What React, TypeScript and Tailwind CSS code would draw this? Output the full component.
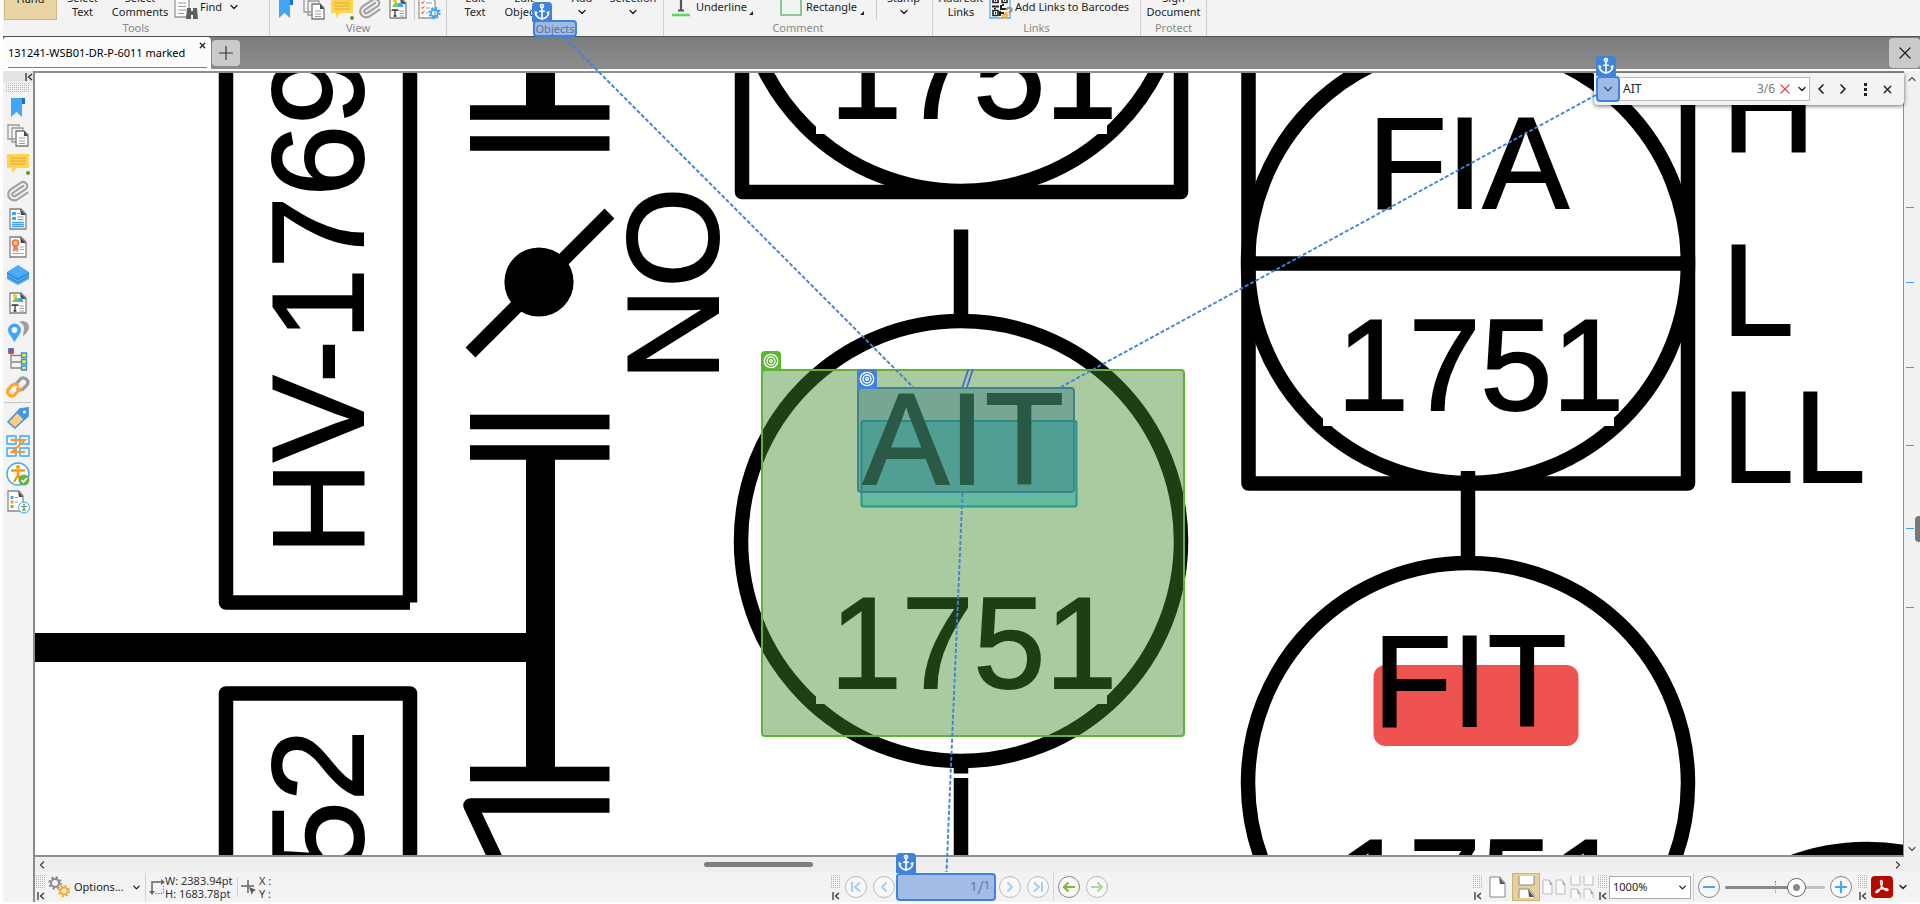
import React from "react";
import { Anchor, ChevronDown, ChevronLeft, ChevronRight, ChevronUp, X, Plus, Minus, Paperclip } from "lucide-react";

type Kids = { children?: React.ReactNode };

const Ico = ({ s = 24, children }: Kids & { s?: number }) => (
  <svg width={s} height={s} viewBox="0 0 24 24" fill="none" aria-hidden="true" className="shrink-0">
    {children}
  </svg>
);

const BookmarkIcon = () => (
  <Ico>
    <path d="M5 3h11v19l-5.500-5L5 22z" fill="#42a5f5" />
    <path d="M16 3h3v6h-3z" fill="#1a73c9" />
  </Ico>
);
const PagesIcon = () => (
  <Ico>
    <path d="M9 16H2V2h11v2M12 19H6V5h11v2" stroke="#999" strokeWidth="1.300" />
    <path d="M10 8h8l4 4v11H10z" fill="#fff" stroke="#777" strokeWidth="1.300" />
    <path d="M18 8l4 5h-4z" fill="#444" />
    <path d="M13 15h6M13 18h6M13 20.500h6" stroke="#999" />
  </Ico>
);
const CommentIcon = () => (
  <Ico>
    <path d="M1 3h22v14H11l-5 5v-5H1z" fill="#ffd54f" />
    <path d="M4 7h16M4 10h16M4 13h16" stroke="#e0a93a" />
    <circle cx="22" cy="22" r="2" fill="#5a9a1e" />
  </Ico>
);
const ClipIcon = () => <Paperclip size={24} color="#a3a3a3" strokeWidth={2.2} className="shrink-0 rotate-12" aria-hidden="true" />;

const Sheet = () => (
  <>
    <path d="M4 2h11l5 5v15H4z" fill="#fff" stroke="#808080" strokeWidth="1.300" />
    <path d="M14 2l6 6h-5z" fill="#444" />
  </>
);
const ListIcon = () => (
  <Ico>
    <Sheet />
    <path d="M6 5h4v3H6zM6 10h4v3H6z" fill="#42a5f5" />
    <path d="M11.500 6.500H14M11.500 10h6M11.500 12.500h6" stroke="#888" />
    <path d="M6 15.500h12M6 17.500h12M6 19.500h12" stroke="#42a5f5" strokeWidth="1.300" />
  </Ico>
);
const CertIcon = () => (
  <Ico>
    <Sheet />
    <path d="M7.500 10l-1 7 3-1.500 3 1.500-1-7z" fill="#f4845f" />
    <circle cx="9.500" cy="8" r="3" fill="#ffcc80" stroke="#f4694a" strokeWidth="1.600" />
    <path d="M14 12h4M14 14.500h4M6 18.500h12" stroke="#aaa" />
  </Ico>
);
const LayersIcon = () => (
  <Ico>
    <path d="M1 9v7l11 6 11-6V9z" fill="#2d8fe0" />
    <path d="M1 12l11 6 11-6M1 15l11 6 11-6" stroke="#7cc1f8" strokeWidth="0.800" />
    <path d="M12 2l11 7-11 6L1 9z" fill="#4dabf5" />
  </Ico>
);
const ImageTextIcon = () => (
  <Ico>
    <Sheet />
    <path d="M6 11l4-6 4 6z" fill="#8bc34a" />
    <circle cx="9" cy="5" r="2" fill="#fbc02d" />
    <path d="M12 7h5v4h-5z" fill="#42a5f5" />
    <path d="M6 14h6M6 15v-1M12 15v-1M9 14v6M7.500 20h3" stroke="#333" strokeWidth="1.300" />
    <path d="M13.500 15h4.500M13.500 17.500h4.500M13.500 20h4.500" stroke="#999" />
  </Ico>
);
const PinsIcon = () => (
  <Ico>
    <path d="M16 2c4 0 7 2.500 7 6 0 4-3 6-6 10 0-4 1-7 1-9 0-3-2-5-5-6z" fill="#9e9e9e" />
    <path fillRule="evenodd" d="M8.500 23C5 17 2 14.500 2 11a6.500 6.500 0 0 1 13 0c0 3.500-3 6-6.500 12zM8.500 8a3 3 0 1 0 0 6 3 3 0 0 0 0-6z" fill="#42a5f5" />
  </Ico>
);
const TreeIcon = () => (
  <Ico>
    <path d="M5 4v17h10M5 8.500h10M5 15h10" stroke="#888" strokeWidth="1.300" />
    <path d="M2.500 1.500h5v5h-5z" fill="#e53935" stroke="#2f8fe0" />
    <path d="M15.500 6h5v4.500h-5zM15.500 12.500h5V17h-5zM15.500 19h5v4h-5z" fill="#ffeb3b" stroke="#2f8fe0" strokeWidth="1.300" />
  </Ico>
);
const LinkIcon = () => (
  <Ico>
    <g strokeWidth="3.200" strokeLinecap="round">
      <path d="M10 9l4-4.500c4-4 10 1 7 5.500l-4 4c-1.500 1.500-4 1-5 0" stroke="#9a9a9a" />
      <path d="M14 14l-5 5.500c-4 4-9.500-1-6.500-5.500l4-4c1.500-1.500 4-1 5 0" stroke="#ffa726" />
    </g>
  </Ico>
);
const TagIcon = () => (
  <Ico>
    <path d="M14 3l8-1v8L9 22l-7-6z" fill="#ffcc80" stroke="#3f98e6" strokeWidth="1.600" />
    <path d="M14 2.500l8.500-1v9L18 14l-7-7z" fill="#3f98e6" />
    <circle cx="18.500" cy="6" r="1.600" fill="#fff" />
  </Ico>
);
const ZIcon = () => (
  <Ico>
    <path d="M1 2h9v8H1zM14 2h9v8h-9zM1 14h9v8H1zM14 14h9v8h-9z" fill="#e8f4fe" stroke="#42a5f5" strokeWidth="1.400" />
    <path d="M5 6h14L6 18h13" stroke="#f59a23" strokeWidth="2" />
  </Ico>
);
const AccessIcon = () => (
  <Ico>
    <circle cx="12" cy="12" r="11" fill="#fff" stroke="#42a5f5" strokeWidth="1.400" />
    <circle cx="12" cy="5" r="2" fill="#ff9800" />
    <path d="M5 8.500h14M12 8v6M12 13l-4 7M12 13l3 6" stroke="#ff9800" strokeWidth="2.400" />
    <circle cx="18" cy="18" r="5.500" fill="#6aaf45" />
    <path d="M15.500 18l2 2 3.500-4" stroke="#fff" strokeWidth="1.600" />
  </Ico>
);
const AccessListIcon = () => (
  <Ico>
    <path d="M2 1h11l4 5v15H2z" fill="#fff" stroke="#888" strokeWidth="1.300" />
    <path d="M12 1l5 6h-4z" fill="#444" />
    <path d="M4.500 6h3v3h-3z" fill="#42a5f5" />
    <path d="M4.500 10.500h3v3h-3z" fill="#ff9800" />
    <path d="M4.500 15h3v3h-3z" fill="#7cb342" />
    <path d="M9 7.500h3M9 12h3" stroke="#999" />
    <circle cx="18" cy="17.500" r="5.500" fill="#fff" stroke="#42a5f5" />
    <circle cx="18" cy="14.500" r="1" fill="#43a047" />
    <path d="M15 16.500h6M18 16v2.500L16.500 21M18 18.500l1.500 2.500" stroke="#43a047" strokeWidth="1.200" />
  </Ico>
);
const Gear = ({ cx, cy, r, color }: { cx: number; cy: number; r: number; color: string }) => (
  <g stroke={color} fill="none">
    <circle cx={cx} cy={cy} r={r - 0.5} strokeWidth="2" />
    <circle cx={cx} cy={cy} r={r + 1.2} strokeWidth="2" strokeDasharray={`${(r + 1.2) * 0.393} ${(r + 1.2) * 0.393}`} />
  </g>
);
const ListGearIcon = () => (
  <Ico>
    <path d="M2 1h12l4 4v17H2z" fill="#fff" stroke="#999" strokeWidth="1.300" />
    <path d="M4.500 6l1 1.500L7.500 5M4.500 11l1 1.500 2-2.500M4.500 16l1 1.500 2-2.500" stroke="#f4694a" strokeWidth="1.200" />
    <path d="M9 7h6M9 12h4M9 17h2" stroke="#999" />
    <Gear cx={17.5} cy={17} r={4} color="#42a5f5" />
  </Ico>
);
const BinocularsIcon = () => (
  <Ico>
    <path d="M1 0h10l4 4v17H1z" fill="#fff" stroke="#999" strokeWidth="1.300" />
    <path d="M4 7h8M4 10.500h8M4 14h8M4 17.500h6" stroke="#999" />
    <path d="M13 12h4v3h2v-3h4l1 11h-5v-4h-2v4h-5z" fill="#5c6166" />
  </Ico>
);
const QrIcon = () => (
  <Ico>
    <path d="M1 0h20v22H1z" fill="#fff" stroke="#7dbdf5" strokeWidth="1.800" />
    <path d="M4 1.500h5v5H4zM13 1.500h5v5h-5zM4 14.500h5v5H4z" stroke="#222" strokeWidth="1.600" />
    <path d="M3 10.500h7M12 9v4h6M11 15v5M14 10v-2M6 12v1.500M6 17h1M6 4h1M15 4h1M12 17h3" stroke="#222" strokeWidth="2" />
    <path d="M17 14l2-2c2-1 5 1 3 3l-2 2" stroke="#999" strokeWidth="2.200" />
    <path d="M18 16l-4 4c-1 2 1 3 3 1l2-3" stroke="#ffa726" strokeWidth="2.200" />
  </Ico>
);

const CollapseIcon = () => (
  <svg width="8" height="8" viewBox="0 0 8 8" fill="none" stroke="#333" strokeWidth="1.300" aria-hidden="true">
    <path d="M1 0v8M7 1L3.500 4 7 7" />
  </svg>
);
const Dots = ({ w, h }: { w: number; h: number }) => (
  <svg width={w} height={h} aria-hidden="true">
    <g stroke="#b4b4b4" strokeDasharray="1 1">
      {Array.from({ length: Math.floor(h / 2) }, (_, i) => (
        <path key={i} d={`M0 ${i * 2 + 0.5}H${w}`} />
      ))}
    </g>
  </svg>
);
const Grip = () => (
  <div className="flex h-7 w-[10px] shrink-0 flex-col items-center justify-between pb-px pt-[2px]">
    <Dots w={10} h={15} />
    <CollapseIcon />
  </div>
);
const Rule = () => <div className="mx-1 h-7 w-px shrink-0 bg-[#d2d2d2]" />;

const AnchorBadge = ({ className }: { className: string }) => (
  <span className={`absolute z-30 flex size-5 items-center justify-center rounded-t bg-[#4083dc] text-white ${className}`}>
    <Anchor size={18} strokeWidth={2.2} />
  </span>
);

const Group = ({ title, className, children }: Kids & { title: React.ReactNode; className: string }) => (
  <section className={`flex h-9 shrink-0 flex-col border-r border-[#cfcfcf] ${className}`}>
    <div className="flex h-5 items-end">{children}</div>
    <div className="h-4 text-center leading-4 text-[#888]">{title}</div>
  </section>
);
const Two = ({ a, b, className }: { a: string; b?: string; className: string }) => (
  <button className={`flex shrink-0 flex-col items-center pb-px leading-[14px] ${className}`}>
    <span>{a}</span>
    {b ? <span>{b}</span> : <ChevronDown size={12} strokeWidth={2.8} className="h-[14px]" />}
  </button>
);
const IconButton = ({ label, className, children }: Kids & { label: string; className: string }) => (
  <button aria-label={label} className={`flex shrink-0 items-center justify-center ${className}`}>
    {children}
  </button>
);

const Ribbon = () => (
  <header className="flex h-[37px] shrink-0 border-b border-[#555] bg-[#f3f3f3]">
    <Group title="Tools" className="w-[267px]">
      <button className="ml-px flex h-10 w-[53px] shrink-0 items-end justify-center border border-[#cdb87f] bg-[#e8d5a3] pb-[13px] leading-[14px]">Hand</button>
      <Two a="Select" b="Text" className="w-[51px]" />
      <Two a="Select" b="Comments" className="w-[64px]" />
      <button className="ml-0.5 flex items-end gap-0.5">
        <BinocularsIcon />
        <span className="mb-[6px] leading-[14px]">Find</span>
        <ChevronDown size={12} strokeWidth={2.8} className="mb-[7px] ml-1" />
      </button>
    </Group>
    <Group title="View" className="w-[177px]">
      <div className="ml-1 flex items-center gap-1">
        <IconButton label="Bookmarks" className="h-6 w-6"><BookmarkIcon /></IconButton>
        <IconButton label="Thumbnails" className="h-6 w-6"><PagesIcon /></IconButton>
        <IconButton label="Comments" className="h-6 w-6"><CommentIcon /></IconButton>
        <IconButton label="Attachments" className="h-6 w-6"><ClipIcon /></IconButton>
        <IconButton label="Content" className="h-6 w-6"><ImageTextIcon /></IconButton>
        <IconButton label="Panes" className="h-6 w-7 border-l border-[#ccc]"><ListGearIcon /></IconButton>
      </div>
    </Group>
    <Group
      className="w-[217px]"
      title={
        <span className="relative mx-auto flex h-[17px] w-[44px] items-center justify-center rounded border-2 border-[#4083dc] bg-[#9fbbe5] text-[#5f7396]">
          Objects
          <AnchorBadge className="-left-[3px] -top-5" />
        </span>
      }
    >
      <Two a="Edit" b="Text" className="ml-[5px] w-[46px]" />
      <Two a="Edit" b="Objects" className="w-[52px]" />
      <Two a="Add" className="ml-2 w-[48px]" />
      <Two a="Selection" className="w-[54px]" />
    </Group>
    <Group title="Comment" className="w-[269px]">
      <button className="ml-2 flex w-[108px] items-end gap-[6px] text-left">
        <svg width="18" height="22" viewBox="0 0 18 22" fill="none" className="mb-[3px]" aria-hidden="true">
          <path d="M3 5V2h12v3M9 2v13M6 15.500h6" stroke="#555" strokeWidth="2.200" />
          <path d="M0 20h18" stroke="#5bd75b" strokeWidth="2.500" />
        </svg>
        <span className="mb-[6px] leading-[14px]">Underline</span>
        <svg width="4" height="4" className="-ml-1 mb-[5px]" aria-hidden="true"><path d="M4 0v4H0z" fill="#222" /></svg>
      </button>
      <button className="flex w-[96px] items-end gap-1">
        <span className="mb-1 h-6 w-[22px] shrink-0 border-2 border-[#8fc493] bg-[#f0f4f0]" />
        <span className="mb-[6px] leading-[14px]">Rectangle</span>
        <svg width="4" height="4" className="-ml-px mb-[5px] shrink-0" aria-hidden="true"><path d="M4 0v4H0z" fill="#222" /></svg>
      </button>
      <Two a="Stamp" className="w-[54px] border-l border-[#ccc]" />
    </Group>
    <Group title="Links" className="w-[208px]">
      <Two a="Add/Edit" b="Links" className="w-[56px]" />
      <button className="flex items-end gap-0.5 whitespace-nowrap">
        <QrIcon />
        <span className="mb-[6px] leading-[14px]">Add Links to Barcodes</span>
      </button>
    </Group>
    <Group title="Protect" className="w-[66px]">
      <Two a="Sign" b="Document" className="w-[65px]" />
    </Group>
  </header>
);

const TabBar = () => (
  <nav className="flex h-8 shrink-0 bg-gradient-to-b from-[#7d7d7d] to-[#8c8c8c]">
    <div className="relative flex w-[208px] items-center rounded-t-sm bg-[#fcfcfc] pl-[5px]">
      <a href="#document" className="whitespace-nowrap text-[11px] text-black">131241-WSB01-DR-P-6011 marked</a>
      <button aria-label="Close tab" className="absolute right-1 top-1"><X size={9} strokeWidth={3.5} /></button>
      <span className="absolute bottom-px left-[5px] right-1 h-px bg-[#808080]" />
    </div>
    <IconButton label="New tab" className="my-[3px] ml-px w-7 rounded-sm bg-[#cacaca] text-[#333]"><Plus size={22} strokeWidth={1.3} /></IconButton>
    <IconButton label="Close document" className="my-px ml-auto w-[31px] rounded-sm bg-[#cacaca]"><X size={20} strokeWidth={1.5} /></IconButton>
  </nav>
);

const paneIcons: [string, () => React.ReactElement][] = [
  ["Bookmarks", BookmarkIcon], ["Thumbnails", PagesIcon], ["Comments", CommentIcon], ["Attachments", ClipIcon],
  ["Fields", ListIcon], ["Signatures", CertIcon], ["Layers", LayersIcon], ["Content", ImageTextIcon],
  ["Destinations", PinsIcon], ["Model tree", TreeIcon], ["Links", LinkIcon],
];
const tagIcons: [string, () => React.ReactElement][] = [
  ["Tags", TagIcon], ["Order", ZIcon], ["Accessibility", AccessIcon], ["Report", AccessListIcon],
];

const Sidebar = () => (
  <aside className="flex w-8 shrink-0 flex-col border-r-2 border-[#8a8a8a] bg-[#f3f3f3]">
    <div className="flex h-[11px] items-center justify-end bg-[#e4e4e4]"><CollapseIcon /></div>
    <div className="flex h-[11px] items-center justify-center"><Dots w={24} h={10} /></div>
    {paneIcons.map(([label, C]) => (
      <IconButton key={label} label={label} className="h-7 w-full"><C /></IconButton>
    ))}
    <div className="mx-0.5 my-px h-px shrink-0 bg-[#c4c4c4]" />
    {tagIcons.map(([label, C]) => (
      <IconButton key={label} label={label} className="h-7 w-full"><C /></IconButton>
    ))}
  </aside>
);

const Bubble = ({ cx, cy }: { cx: number; cy: number }) => (
  <>
    <circle cx={cx} cy={cy} r="220" fill="none" strokeWidth="14.500" />
    <rect x={cx - 145} y={cy + 60} width="291" height="103" fill="#fff" stroke="none" />
    <text x={cx - 131} y={cy + 147}>1751</text>
  </>
);

const Drawing = () => (
  <svg className="block h-full w-full" fill="none" role="img" aria-label="Piping and instrumentation drawing">
    <g transform="translate(-35 -71)" stroke="#000" strokeWidth="14.500" strokeLinejoin="round">
      <path d="M226 60V602.500H410M410 60V602.500M226 900V693.500H410V900" />
      <path d="M34 647.500H527" strokeWidth="29" />
      <path d="M540.500 60V106M540.500 458V768" strokeWidth="29" />
      <path d="M470 112.500H609.500M470 143.500H609.500M470 422H609.500M470 452.500H609.500M470 774H609.500M609.500 805.500H470.500L498 864" />
      <path d="M470.500 352.500L609.500 213.500" strokeWidth="14" />
      <circle cx="539" cy="282" r="34.600" fill="#000" stroke="none" />
      <path d="M961 229.500V320M961 760V773.500M961 778V860" />
      <g fill="#000" strokeWidth="2" strokeLinejoin="miter" fontFamily="'Liberation Sans', Arial, sans-serif" fontSize="129">
        <rect x="861.500" y="421" width="215" height="85.500" rx="2" fill="#80e6ff" stroke="#0da1db" />
        <rect x="1373.500" y="665" width="205" height="81" rx="12" fill="#ef5350" stroke="none" />
        <Bubble cx={961} cy={-29} />
        <circle cx="961" cy="541" r="220" fill="none" strokeWidth="14.500" />
        <path d="M816 640H1107V704H816z" fill="#fff" stroke="none" />
        <text x="830" y="688">1751</text>
        <text x="863" y="484">AIT</text>
        <Bubble cx={1468} cy={263} />
        <text x="1368" y="208">FIA</text>
        <text x="1373" y="726">FIT</text>
        <Bubble cx={1468} cy={783} />
        <text x="1722" y="151">H</text>
        <text x="1722" y="335">L</text>
        <text x="1722" y="482">LL</text>
        <text transform="translate(363 555) rotate(-90)">HV-1769</text>
        <text transform="translate(363 873) rotate(-90)">52</text>
        <text transform="translate(718 381) rotate(-90)">NO</text>
      </g>
      <path d="M742 60V192H1181V60M1248.500 60V483.500H1688V60M1248 263.500H1688M1468 471V560" />
      <circle cx="1867" cy="1069" r="220" />
    </g>
  </svg>
);

const TargetBadge = ({ className }: { className: string }) => (
  <span className={`absolute z-30 flex size-5 items-center justify-center rounded-t ${className}`}>
    <svg width="16" height="16" viewBox="0 0 16 16" fill="none" stroke="#fff" strokeWidth="1.300" aria-hidden="true">
      <circle cx="8" cy="8" r="6.700" />
      <circle cx="8" cy="8" r="4" />
      <circle cx="8" cy="8" r="1.300" />
    </svg>
  </span>
);

const SearchBox = () => (
  <form className="absolute right-0 top-0.5 z-20 flex h-8 w-[310px] items-center rounded-b bg-[#f3f3f3] pl-0.5 shadow-[0_1px_4px_rgba(0,0,0,0.6)]">
    <div className="relative">
      <button type="button" aria-label="Search options" className="flex h-[26px] w-6 items-center justify-center rounded border-2 border-[#4083dc] bg-[#9fbbe5] text-[#3b5a8c]">
        <ChevronDown size={14} strokeWidth={2.4} />
      </button>
      <AnchorBadge className="-top-5 left-0" />
    </div>
    <div className="flex h-6 w-[190px] items-center border border-l-0 border-[#bbb] bg-white pl-[3px]">
      <input aria-label="Find text" defaultValue="AIT" className="w-[134px] bg-transparent text-[12px] outline-none" />
      <span className="text-[12px] text-[#777]">3/6</span>
      <button type="button" aria-label="Clear" className="ml-0.5 text-[#e05050]"><X size={16} strokeWidth={2} /></button>
      <button type="button" aria-label="History" className="ml-[3px]"><ChevronDown size={12} strokeWidth={2.8} /></button>
    </div>
    <IconButton label="Previous" className="w-[22px]"><ChevronLeft size={16} strokeWidth={2.6} /></IconButton>
    <IconButton label="Next" className="w-[22px]"><ChevronRight size={16} strokeWidth={2.6} /></IconButton>
    <IconButton label="More" className="w-[22px]">
      <svg width="3" height="13" aria-hidden="true"><path d="M0 0h3v3H0zM0 5h3v3H0zM0 10h3v3H0z" fill="#222" /></svg>
    </IconButton>
    <IconButton label="Close search" className="w-[22px]"><X size={13} strokeWidth={2.6} /></IconButton>
  </form>
);

const marks = [207, 282, 367, 445, 528, 607];

const Round = ({ label, border, color, children }: Kids & { label: string; border: string; color: string }) => (
  <button aria-label={label} className={`flex size-[22px] shrink-0 items-center justify-center rounded-full border bg-[#f8f8f8] ${border} ${color}`}>
    {children}
  </button>
);
const End = ({ flip = false }: { flip?: boolean }) => (
  <svg width="12" height="12" viewBox="0 0 12 12" fill="none" stroke="currentColor" strokeWidth="2" className={flip ? "rotate-180" : ""} aria-hidden="true">
    <path d="M2 1v10M10 1.500L5 6l5 4.500" />
  </svg>
);
const Arrow = ({ flip = false }: { flip?: boolean }) => (
  <svg width="14" height="12" viewBox="0 0 14 12" fill="none" stroke="currentColor" strokeWidth="2.200" className={flip ? "rotate-180" : ""} aria-hidden="true">
    <path d="M13 6H2M6.500 1.500L2 6l4.500 4.500" />
  </svg>
);

const StatusBar = () => (
  <footer className="flex h-[30px] shrink-0 items-center bg-[#f3f3f3] text-[11px]">
    <div className="flex min-w-0 flex-1 items-center whitespace-nowrap pl-px">
      <Grip />
      <button className="ml-px flex items-center gap-[3px] text-[12px]">
        <svg width="24" height="24" viewBox="0 0 24 24" aria-hidden="true">
          <Gear cx={8} cy={8} r={4.5} color="#8a8a8a" />
          <Gear cx={17} cy={16} r={4} color="#ffa726" />
        </svg>
        <span className="w-[54px] text-left text-[11px]">Options...</span>
        <ChevronDown size={11} strokeWidth={3} />
      </button>
      <div className="mx-[3px] h-7 w-px bg-[#d2d2d2]" />
      <svg width="16" height="18" viewBox="0 0 16 18" fill="none" aria-hidden="true">
        <path d="M3 15V4h11" stroke="#666" strokeWidth="1.500" />
        <path d="M12 1l4 3-4 3zM0 13h6l-3 4z" fill="#666" />
        <path d="M6 15.500h9M14.500 15V8" stroke="#777" strokeDasharray="1.500 1.500" />
      </svg>
      <div className="w-[72px] text-[11px] leading-[13px] text-[#333]">
        <div>W: 2383.94pt</div>
        <div>H: 1683.78pt</div>
      </div>
      <div className="mr-[3px] h-5 w-px bg-[#d2d2d2]" />
      <svg width="17" height="17" viewBox="0 0 17 17" aria-hidden="true">
        <path d="M0 7h13M7 1v13" stroke="#666" strokeWidth="1.500" />
        <path d="M8 8l7 3-3 1.500L11 16z" fill="#555" />
      </svg>
      <div className="ml-px text-[11px] leading-[13px] text-[#333]">
        <div>X :</div>
        <div>Y :</div>
      </div>
    </div>
    <div className="mr-[6px] flex shrink-0 items-center">
      <Grip />
      <div className="ml-1 flex items-center gap-[6px]">
        <Round label="First page" border="border-[#bbb]" color="text-[#9fd0f7]"><End /></Round>
        <Round label="Previous page" border="border-[#bbb]" color="text-[#9fd0f7]"><ChevronLeft size={16} strokeWidth={3} /></Round>
      </div>
      <div className="relative ml-px">
        <label className="flex h-[28px] w-[100px] items-center justify-end rounded border-2 border-[#4083dc] bg-[#a2bce5] pr-1 text-[#5f7396]">
          <input aria-label="Page" defaultValue="1" className="w-10 bg-transparent text-right text-[13px] outline-none" />
          <span className="text-[18px] font-light leading-5">/</span>
          <span className="mb-1 text-[11px]">1</span>
        </label>
        <AnchorBadge className="-top-5 left-0" />
      </div>
      <div className="ml-[3px] flex items-center gap-[6px]">
        <Round label="Next page" border="border-[#bbb]" color="text-[#9fd0f7]"><ChevronRight size={16} strokeWidth={3} /></Round>
        <Round label="Last page" border="border-[#bbb]" color="text-[#9fd0f7]"><End flip /></Round>
      </div>
      <Rule />
      <div className="flex items-center gap-[6px]">
        <Round label="Back" border="border-[#888]" color="text-[#7cb842]"><Arrow /></Round>
        <Round label="Forward" border="border-[#bbb]" color="text-[#b5d69a]"><Arrow flip /></Round>
      </div>
    </div>
    <div className="flex min-w-0 flex-1 items-center justify-end pr-[11px]">
      <Grip />
      <IconButton label="Single page" className="ml-[6px] w-[17px]">
        <svg width="17" height="22" viewBox="0 0 17 22" aria-hidden="true"><path d="M1 1h10l5 6v14H1z" fill="#fff" stroke="#888" /><path d="M10 1l6 7h-5z" fill="#555" /></svg>
      </IconButton>
      <IconButton label="Continuous" className="ml-[6px] h-7 w-7 border border-[#c9b27a] bg-[#e8d09a]">
        <svg width="17" height="22" viewBox="0 0 17 22" aria-hidden="true"><path d="M1 0v9h15V0M1 22V13h10l5 6v3" fill="#fff" stroke="#888" /><path d="M10 13l6 8h-5z" fill="#555" /></svg>
      </IconButton>
      <IconButton label="Two pages" className="ml-0.5 w-6">
        <svg width="24" height="16" viewBox="0 0 24 16" fill="#fafafa" stroke="#bbb" aria-hidden="true"><path d="M1 1h6l3 4v10H1zM14 1h6l3 4v10h-9z" /><path d="M7 1l3 5H8zM20 1l3 5h-2z" fill="#999" stroke="none" /></svg>
      </IconButton>
      <IconButton label="Two pages continuous" className="ml-1 w-6">
        <svg width="24" height="22" viewBox="0 0 24 22" fill="#fafafa" stroke="#bbb" aria-hidden="true"><path d="M1 0v9h9V0M14 0v9h9V0M1 22v-9h6l3 4v5M14 22v-9h6l3 4v5" /><path d="M7 13l3 5H8zM20 13l3 5h-2z" fill="#999" stroke="none" /></svg>
      </IconButton>
      <div className="ml-1"><Grip /></div>
      <div className="relative ml-px">
        <select aria-label="Zoom" defaultValue="1000%" className="h-[23px] w-[82px] appearance-none border border-[#aaa] bg-white pl-[3px] text-[11px]">
          <option>1000%</option>
        </select>
        <ChevronDown size={11} strokeWidth={3} className="pointer-events-none absolute right-[3px] top-[6px]" />
      </div>
      <div className="ml-0.5 mr-1 h-7 w-px bg-[#d2d2d2]" />
      <Round label="Zoom out" border="border-[#888]" color="text-[#42a5f5]"><Minus size={18} strokeWidth={2.6} /></Round>
      <div className="relative mx-[5px] flex h-6 w-[100px] items-center">
        <input
          type="range"
          aria-label="Zoom level"
          defaultValue={76}
          className="h-[3px] w-full appearance-none rounded bg-gradient-to-r from-[#888] from-70% to-[#c0c0c0] to-70% [&::-webkit-slider-thumb]:size-[19px] [&::-webkit-slider-thumb]:appearance-none [&::-webkit-slider-thumb]:rounded-full [&::-webkit-slider-thumb]:border [&::-webkit-slider-thumb]:border-solid [&::-webkit-slider-thumb]:border-[#666] [&::-webkit-slider-thumb]:bg-[radial-gradient(circle,#888_0_3px,#fff_4px)]"
        />
        <span className="absolute left-1/2 top-[6px] h-3 border-l border-dotted border-[#888]" />
      </div>
      <Round label="Zoom in" border="border-[#888]" color="text-[#42a5f5]"><Plus size={18} strokeWidth={2.6} /></Round>
      <div className="ml-[6px]"><Grip /></div>
      <IconButton label="PDF" className="ml-[3px] size-[22px] rounded bg-[#b30b00] text-white">
        <svg width="16" height="16" viewBox="0 0 16 16" fill="none" stroke="currentColor" strokeWidth="1.400" aria-hidden="true">
          <path d="M7 1.500c1.600-.500 1.500 3 .700 5.500C6.800 10 4 14 2.300 13.600c-1.600-1 2-3.200 5.200-3.800 3-.700 6.800-.300 6.500 1.200-.500 1.400-4-.500-5.600-2.500C6.800 6.500 5.800 2.300 7 1.500z" />
        </svg>
      </IconButton>
      <ChevronDown size={12} strokeWidth={3} className="ml-1 shrink-0" />
    </div>
  </footer>
);

const Connectors = () => (
  <svg className="pointer-events-none absolute inset-0 z-20 h-full w-full" fill="none" aria-hidden="true">
    <g stroke="#3f83dc" strokeWidth="1.900" strokeDasharray="4 2">
      <path d="M565 38L913 387M1596 95L1061 387M962.500 493L946.500 872" />
    </g>
    <path d="M968.500 369L962.500 387M973 369L967 387" stroke="#4169dc" strokeWidth="1.700" />
  </svg>
);

export default function App() {
  return (
    <div className="relative flex h-screen flex-col overflow-hidden bg-white pb-0.5 pl-[3px] font-['Noto_Sans','Open_Sans',sans-serif] text-[11px] text-[#222]">
      <Ribbon />
      <TabBar />
      <div className="flex min-h-0 flex-1 pt-0.5">
        <Sidebar />
        <div className="flex min-w-0 flex-1 flex-col">
          <div className="flex min-h-0 flex-1">
            <main className="relative min-w-0 flex-1 bg-white">
              <div className="absolute inset-0 overflow-hidden"><Drawing /></div>
              <div className="pointer-events-none absolute inset-0 border-b-2 border-r border-t-2 border-[#8a908a]" />
              <div className="absolute left-[726px] top-[298px] z-10 h-[368px] w-[424px] rounded border-2 border-[#5cb536] bg-[#43892b]/45">
                <TargetBadge className="-left-[2px] -top-5 bg-[#5cb536]" />
              </div>
              <div className="absolute left-[822px] top-[316px] z-10 h-[106px] w-[218px] rounded border-2 border-[#428190] bg-[#3a7c86]/45">
                <TargetBadge className="-left-[2px] -top-5 bg-[#4083dc]" />
              </div>
              <SearchBox />
            </main>
            <div className="relative w-4 shrink-0 bg-[#f1f1f1]">
              <ChevronUp size={12} strokeWidth={2.4} className="absolute left-[2px] top-0.5 text-[#555]" />
              {marks.map((y) => (
                <span key={y} className="absolute left-[2px] h-px w-2 bg-[#3f9df0]" style={{ top: y - 71 }} />
              ))}
              <span className="absolute right-0 top-[445px] h-[26px] w-[5px] rounded-l bg-[#777]" />
              <ChevronDown size={12} strokeWidth={2.4} className="absolute bottom-0.5 left-[2px] text-[#555]" />
            </div>
          </div>
          <div className="relative flex h-[15px] shrink-0 items-center justify-between bg-[#eee] pl-px pr-4 text-[#444]">
            <ChevronLeft size={12} strokeWidth={2.6} />
            <span className="absolute left-[669px] h-[5px] w-[109px] rounded bg-[#7f7f7f]" />
            <ChevronRight size={12} strokeWidth={2.6} />
          </div>
          <StatusBar />
        </div>
      </div>
      <Connectors />
    </div>
  );
}
